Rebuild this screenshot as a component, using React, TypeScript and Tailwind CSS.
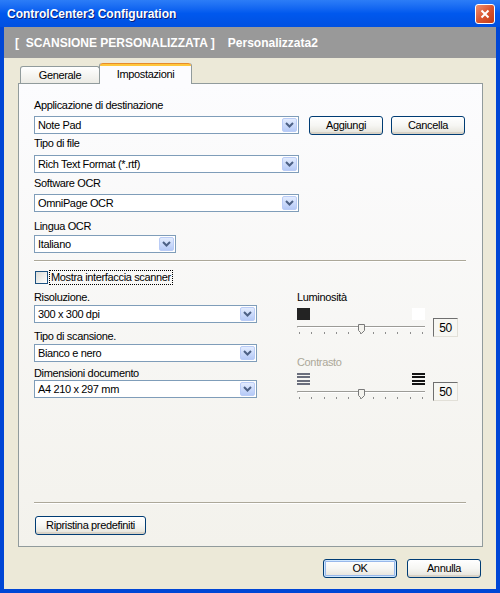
import React from "react";

function Chevron() {
  return (
    <svg width="9" height="6" viewBox="0 0 9 6">
      <path d="M1 1 L4.5 4.5 L8 1" fill="none" stroke="#4D6185" strokeWidth="2" />
    </svg>
  );
}

function Combo({ value, w }: { value: string; w: string }) {
  return (
    <div className={`flex h-[18px] ${w} items-center border border-[#7F9DB9] bg-white`}>
      <span className="flex-1 truncate pl-[3px] leading-none text-black">{value}</span>
      <div className="mr-[1px] flex h-[14px] w-[15px] items-center justify-center rounded-[2px] border border-[#BACCF6] bg-gradient-to-b from-[#E3ECFE] to-[#B6CAF7]">
        <Chevron />
      </div>
    </div>
  );
}

function Btn({ children, w, def }: { children: React.ReactNode; w: string; def?: boolean }) {
  return (
    <div
      className={`flex h-[19px] ${w} shrink-0 items-center justify-center rounded-[3px] border border-[#003C74] bg-gradient-to-b from-white via-[#F6F6F3] to-[#E4E2D9] leading-none text-black ${
        def
          ? "shadow-[inset_0_0_0_1px_#CEE7FF,inset_0_0_0_2px_#98B8EA]"
          : "shadow-[inset_0_-2px_0_#D8D2C6]"
      }`}
    >
      {children}
    </div>
  );
}

function Label({ children, className = "" }: { children: React.ReactNode; className?: string }) {
  return <div className={`h-[14px] leading-[14px] ${className}`}>{children}</div>;
}

function Sep({ className = "" }: { className?: string }) {
  return <div className={`h-[2px] border-t border-b border-t-[#ACA899] border-b-white ${className}`} />;
}

function Slider() {
  return (
    <>
      <div className="flex h-[10px] items-start">
        <div className="mt-[6px] h-[2px] flex-1 rounded-l-[2px] border-t border-l border-[#9C9B97] border-b border-b-white" />
        <svg width="7" height="10" viewBox="0 0 7 10" className="mt-[4px] shrink-0">
          <path d="M0.5 0.5H6.5V6.5L3.5 9.5L0.5 6.5Z" fill="#F4F3EE" stroke="#7A7A7A" />
        </svg>
        <div className="mt-[6px] h-[2px] flex-1 border-t border-[#9C9B97] border-b border-b-white" />
      </div>
      <div className="mt-[2px] flex justify-between px-[2px]">
        {Array.from({ length: 11 }).map((_, i) => (
          <div key={i} className="h-[2px] w-[1px] bg-[#8E8E8E]" />
        ))}
      </div>
    </>
  );
}

function ValueBox({ mt }: { mt: string }) {
  return (
    <div
      className={`ml-[8px] ${mt} flex h-[19px] w-[25px] shrink-0 items-center justify-center border border-t-[#6F6F6F] border-l-[#6F6F6F] border-b-[#E2E0D8] border-r-[#E2E0D8] bg-[#F7F7F3] text-[12px] leading-none`}
    >
      50
    </div>
  );
}

function Bars({ color }: { color: string }) {
  return (
    <div className="flex h-[12px] w-[13px] flex-col justify-between">
      {Array.from({ length: 4 }).map((_, i) => (
        <div key={i} className={`h-[2px] w-full ${color}`} />
      ))}
    </div>
  );
}

export default function App() {
  return (
    <div className="flex h-[593px] w-[500px] flex-col overflow-hidden bg-[#0046D5] font-['Liberation_Sans',Arial,sans-serif] text-[11px] tracking-[-0.35px] text-black">
      {/* Title bar */}
      <div className="flex h-[27px] shrink-0 items-center bg-gradient-to-b from-[#2C7DF7] via-[#0058EE] to-[#0050E0]">
        <span className="ml-[7px] flex-1 text-[12px] font-bold tracking-normal text-white [text-shadow:1px_1px_0_#0A1E7A]">
          ControlCenter3 Configuration
        </span>
        <div className="mr-[5px] flex h-[20px] w-[20px] items-center justify-center rounded-[3px] border border-white bg-gradient-to-br from-[#EE9070] via-[#DA5530] to-[#C33B13]">
          <svg width="10" height="10" viewBox="0 0 10 10">
            <path d="M1.5 1.5 L8.5 8.5 M8.5 1.5 L1.5 8.5" stroke="white" strokeWidth="2" />
          </svg>
        </div>
      </div>

      {/* Body */}
      <div className="mx-[4px] mb-[4px] flex flex-1 flex-col bg-[#ECE9D8]">
        {/* Header band */}
        <div className="flex h-[31px] shrink-0 items-center bg-[#999999] pl-[11px] text-[12px] font-bold tracking-normal text-white">
          <span className="whitespace-pre">[  SCANSIONE PERSONALIZZATA ]</span>
          <span className="ml-[13px]">Personalizzata2</span>
        </div>

        {/* Tabs */}
        <div className="ml-[16px] mt-[5px] flex h-[20px] items-end">
          <div className="flex h-[17px] w-[80px] items-center justify-center rounded-t-[3px] border border-b-0 border-[#919B9C] bg-gradient-to-b from-white to-[#ECEBE5] pt-[1px]">
            Generale
          </div>
          <div className="relative z-10 -mb-[1px] -ml-[1px] flex h-[21px] w-[93px] flex-col rounded-t-[3px] border-x border-[#919B9C] bg-[#FCFCFE]">
            <div className="h-[3px] rounded-t-[3px] border-t border-[#E68B2C] bg-[#FFC73C]" />
            <div className="flex flex-1 items-center justify-center pb-[2px]">Impostazioni</div>
          </div>
        </div>

        {/* Panel */}
        <div className="ml-[14px] flex h-[464px] w-[465px] flex-col border border-[#919B9C] bg-gradient-to-b from-[#FCFCFE] to-[#F3F2EC] pl-[15px] pr-[16px]">
          <Label className="mt-[14px]">Applicazione di destinazione</Label>
          <div className="mt-[3px] flex h-[20px] items-center">
            <Combo value="Note Pad" w="w-[265px]" />
            <div className="ml-[10px] flex gap-[8px]">
              <Btn w="w-[74px]">Aggiungi</Btn>
              <Btn w="w-[74px]">Cancella</Btn>
            </div>
          </div>

          <Label className="mt-[1px]">Tipo di file</Label>
          <div className="mt-[5px]">
            <Combo value="Rich Text Format (*.rtf)" w="w-[265px]" />
          </div>

          <Label className="mt-[3px]">Software OCR</Label>
          <div className="mt-[4px]">
            <Combo value="OmniPage OCR" w="w-[265px]" />
          </div>

          <Label className="mt-[7px]">Lingua OCR</Label>
          <div className="mt-[2px]">
            <Combo value="Italiano" w="w-[142px]" />
          </div>

          <Sep className="mt-[7px]" />

          <div className="mt-[8px] flex h-[14px] items-center">
            <div className="ml-[1px] h-[13px] w-[13px] border border-[#1C5180] bg-gradient-to-br from-[#DCDCD7] to-white" />
            <div className="ml-[1px] flex h-[15px] items-center border border-dotted border-black px-[1px]">
              Mostra interfaccia scanner
            </div>
          </div>

          <div className="mt-[6px] flex">
            {/* Left column */}
            <div className="flex w-[223px] flex-col">
              <Label>Risoluzione.</Label>
              <div className="mt-[1px]">
                <Combo value="300 x 300 dpi" w="w-[223px]" />
              </div>
              <Label className="mt-[6px]">Tipo di scansione.</Label>
              <div className="mt-[1px]">
                <Combo value="Bianco e nero" w="w-[223px]" />
              </div>
              <Label className="mt-[4px]">Dimensioni documento</Label>
              <div>
                <Combo value="A4 210 x 297 mm" w="w-[223px]" />
              </div>
            </div>

            {/* Right column */}
            <div className="ml-[40px] flex flex-col">
              <Label>Luminosità</Label>
              <div className="flex items-start">
                <div className="flex w-[128px] flex-col">
                  <div className="mt-[4px] flex h-[12px] justify-between">
                    <div className="h-[12px] w-[13px] bg-[#232323]" />
                    <div className="h-[12px] w-[13px] bg-white" />
                  </div>
                  <Slider />
                </div>
                <ValueBox mt="mt-[14px]" />
              </div>

              <Label className="mt-[18px] text-[#ACA899]">Contrasto</Label>
              <div className="flex items-start">
                <div className="flex w-[128px] flex-col">
                  <div className="mt-[4px] flex h-[12px] justify-between">
                    <Bars color="bg-[#6A6E7C]" />
                    <Bars color="bg-[#141414]" />
                  </div>
                  <Slider />
                </div>
                <ValueBox mt="mt-[13px]" />
              </div>
            </div>
          </div>

          <div className="flex-1" />
          <Sep />
          <div className="mt-[12px] mb-[11px] ml-[1px] flex">
            <Btn w="w-[111px]">Ripristina predefiniti</Btn>
          </div>
        </div>

        {/* Dialog buttons */}
        <div className="mt-[12px] flex justify-end gap-[10px] pr-[15px]">
          <Btn w="w-[74px]" def>
            OK
          </Btn>
          <Btn w="w-[74px]">Annulla</Btn>
        </div>
      </div>
    </div>
  );
}
